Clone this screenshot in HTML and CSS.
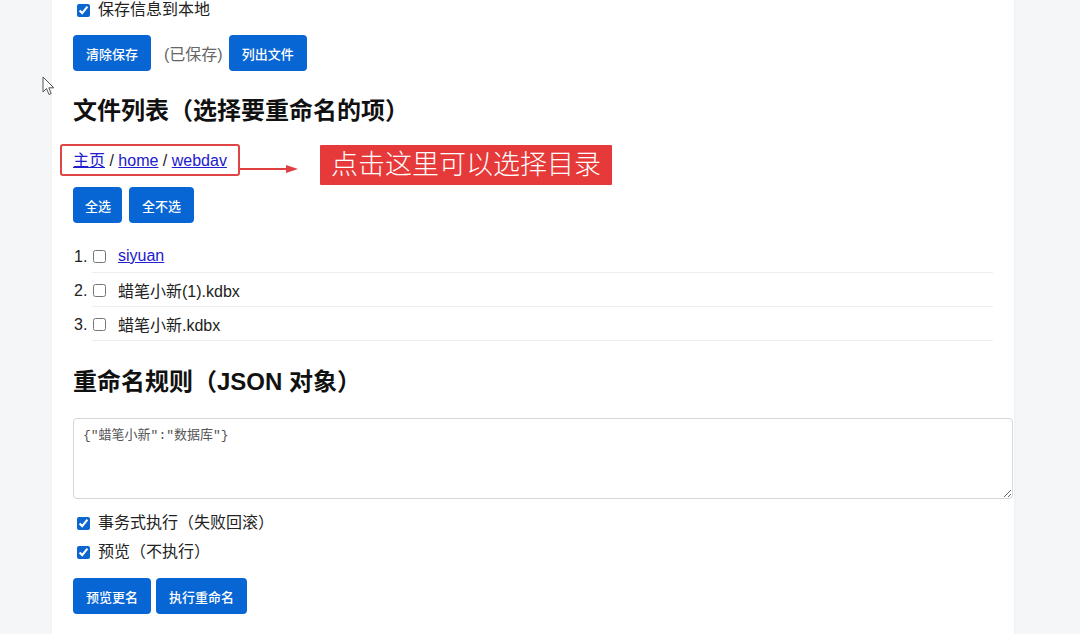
FILE: index.html
```html
<!DOCTYPE html>
<html lang="zh-CN">
<head>
<meta charset="utf-8">
<title>批量重命名</title>
<link rel="stylesheet" href="styles.css">
</head>
<body>
<div class="page">
  <label class="check-row first-row"><input type="checkbox" checked> 保存信息到本地</label>

  <div class="btn-row row-save">
    <button class="btn">清除保存</button>
    <span class="saved">(已保存)</span>
    <button class="btn">列出文件</button>
  </div>

  <h2 class="title">文件列表（选择要重命名的项）</h2>

  <div class="crumb-row">
    <div class="crumb-box">
      <a href="#">主页</a> / <a href="#">home</a> / <a href="#">webdav</a>
    </div>
    <svg class="arrow" width="60" height="10" viewBox="0 0 60 10">
      <line x1="0" y1="5" x2="48" y2="5" stroke="#e04040" stroke-width="2"/>
      <polygon points="46,1 58,5 46,9" fill="#e04040"/>
    </svg>
    <div class="note">点击这里可以选择目录</div>
  </div>

  <div class="btn-row row-select">
    <button class="btn btn-narrow">全选</button>
    <button class="btn">全不选</button>
  </div>

  <ol class="files">
    <li><input type="checkbox"><a href="#">siyuan</a></li>
    <li><input type="checkbox"><span>蜡笔小新(1).kdbx</span></li>
    <li><input type="checkbox"><span>蜡笔小新.kdbx</span></li>
  </ol>

  <h2 class="title title-rules">重命名规则（JSON 对象）</h2>

  <textarea class="rules">{"蜡笔小新":"数据库"}</textarea>

  <label class="check-row opt-1"><input type="checkbox" checked> 事务式执行（失败回滚）</label>
  <label class="check-row opt-2"><input type="checkbox" checked> 预览（不执行）</label>

  <div class="btn-row row-run">
    <button class="btn">预览更名</button>
    <button class="btn">执行重命名</button>
  </div>
</div>

<svg class="cursor" width="14" height="20" viewBox="0 0 14 20">
  <path d="M1 1 L1 16 L4.5 12.5 L7 18.5 L9.2 17.6 L6.8 11.8 L11.8 11.8 Z" fill="#fff" stroke="#555" stroke-width="1" stroke-linejoin="round"/>
</svg>
</body>
</html>
```

FILE: styles.css
```css
html, body {
  margin: 0;
  padding: 0;
}

body {
  background: #f4f6f8;
  font-family: "Liberation Sans", "Noto Sans CJK SC", sans-serif;
  color: #222;
  font-size: 16px;
  position: relative;
  min-height: 634px;
}

.page {
  margin-left: 52px;
  width: 920px;
  padding: 0 21px 20px;
  background: #fff;
  min-height: 614px;
  box-shadow: 0 0 3px rgba(0, 0, 0, 0.05);
}

.check-row {
  display: flex;
  align-items: center;
  height: 20px;
  line-height: 20px;
  gap: 5px;
}

.check-row input {
  width: 13px;
  height: 13px;
  margin: 0 3px 0 4px;
  accent-color: #0b66d0;
}

.first-row {
  padding-top: 0;
}

.btn-row {
  display: flex;
  align-items: center;
}

.btn {
  height: 36px;
  padding: 0 13px;
  border: none;
  border-radius: 4px;
  background: #0866d4;
  color: #fff;
  font-family: "Liberation Sans", "Noto Sans CJK SC", sans-serif;
  font-size: 13px;
  font-weight: 500;
  cursor: pointer;
}

.btn-narrow {
  padding: 0 11px 0 12px;
}

.row-save {
  margin-top: 15px;
}

.saved {
  color: #666;
  margin: 0 6px 0 13px;
}

.row-select {
  margin-top: 2px;
  gap: 7px;
}

.row-run {
  margin-top: 16px;
  gap: 5px;
}

.title {
  margin: 24px 0 0;
  font-size: 24px;
  line-height: 32px;
  font-weight: 700;
  color: #111;
}

.title-rules {
  margin-top: 25px;
}

.crumb-row {
  display: flex;
  align-items: flex-start;
  margin-top: 17px;
  height: 41px;
}

.crumb-box {
  margin-left: -13px;
  border: 2px solid #e04545;
  border-radius: 3px;
  padding: 5px 11px 3px;
  line-height: 20px;
}

.crumb-box a,
.files a {
  color: #2020cc;
}

.arrow {
  margin-top: 20px;
  flex: none;
}

.note {
  margin-left: 20px;
  margin-top: 1px;
  height: 40px;
  width: 292px;
  background: #e63a3a;
  color: #fff;
  font-size: 27px;
  font-weight: 300;
  line-height: 40px;
  text-align: center;
  letter-spacing: 0;
  border-radius: 1px;
}

.files {
  margin: 16px 0 0;
  padding-left: 19px;
  list-style: none;
}

.files li {
  display: flex;
  align-items: center;
  height: 33px;
  border-bottom: 1px solid #eee;
  padding-left: 1px;
  padding-top: 1px;
  box-sizing: border-box;
  height: 34px;
  counter-increment: item;
  position: relative;
}

.files li::before {
  content: counter(item) ".";
  position: absolute;
  left: -18px;
  top: 8px;
  line-height: 20px;
}

.files input {
  width: 13px;
  height: 13px;
  margin: 0 12px 0 0;
}

.rules {
  display: block;
  margin-top: 20px;
  width: 940px;
  height: 81px;
  box-sizing: border-box;
  border: 1px solid #d6d6d6;
  border-radius: 4px;
  padding: 9px 9px;
  font-family: "Liberation Mono", "Noto Sans CJK SC", monospace;
  font-size: 13px;
  line-height: 16px;
  color: #555;
  resize: vertical;
}

.opt-1 {
  margin-top: 14px;
}

.opt-2 {
  margin-top: 9px;
}

.cursor {
  position: absolute;
  left: 42px;
  top: 76px;
}
```
